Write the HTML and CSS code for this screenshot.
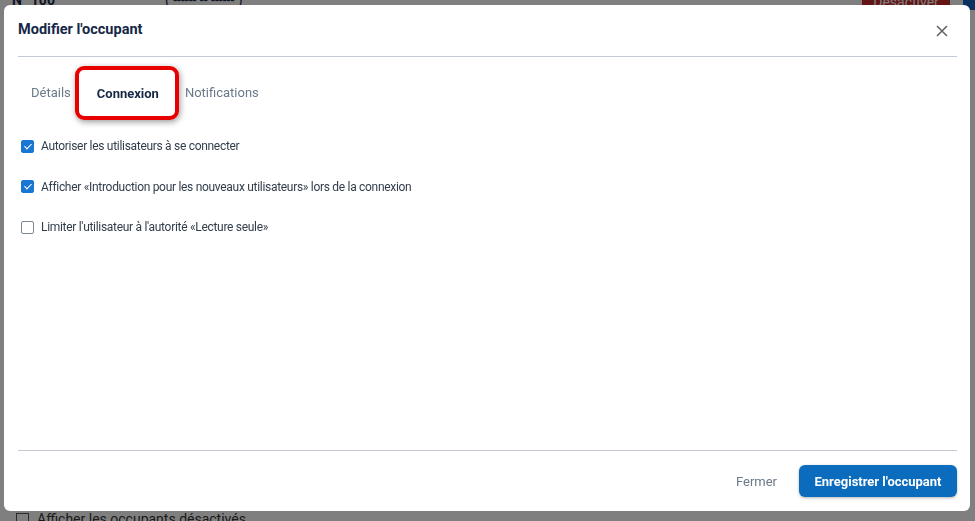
FILE: index.html
```html
<!DOCTYPE html>
<html lang="fr">
<head>
    <meta charset="UTF-8">
    <title>Modifier l'occupant</title>
    <link rel="stylesheet" href="styles.css">
</head>
<body>

    <!-- Page derrière la modale -->
    <div class="page">
        <div class="page-top">
            <span class="page-title">N° 100</span>
            <span class="page-sub">( ------ -- ------ )</span>
            <span class="page-btn">Désactiver</span>
            <span class="page-corner"></span>
        </div>
        <div class="page-bottom">
            <span class="page-box"></span>
            <span>Afficher les occupants désactivés</span>
        </div>
    </div>

    <!-- Modale -->
    <div class="overlay">
        <div class="modal">
            <div class="modal-header">
                <h2>Modifier l'occupant</h2>
                <span class="close">
                    <svg width="14" height="14" viewBox="0 0 14 14"><path d="M2 2L12 12M12 2L2 12" stroke="#666" stroke-width="1.6" fill="none"/></svg>
                </span>
            </div>

            <div class="tabs">
                <span class="tab">Détails</span>
                <span class="tab active">Connexion</span>
                <span class="tab">Notifications</span>
            </div>

            <div class="options">
                <label class="option">
                    <span class="box checked"></span>
                    Autoriser les utilisateurs à se connecter
                </label>
                <label class="option">
                    <span class="box checked"></span>
                    Afficher «Introduction pour les nouveaux utilisateurs» lors de la connexion
                </label>
                <label class="option">
                    <span class="box"></span>
                    Limiter l'utilisateur à l'autorité «Lecture seule»
                </label>
            </div>

            <div class="modal-footer">
                <button class="btn-link">Fermer</button>
                <button class="btn-primary">Enregistrer l'occupant</button>
            </div>
        </div>
    </div>

</body>
</html>
```

FILE: styles.css
```css
body {
    font-family: Roboto, "Liberation Sans", sans-serif;
    margin: 0;
    padding: 0;
    background-color: #fff;
    width: 975px;
    height: 521px;
    overflow: hidden;
}

/* Page derrière */
.page {
    height: 521px;
    display: flex;
    flex-direction: column;
    justify-content: space-between;
}
.page-top {
    display: flex;
    align-items: flex-start;
    height: 10px;
    padding: 0 0 0 12px;
    font-size: 14px;
    color: #1b2a4a;
    overflow: hidden;
}
.page-title {
    font-weight: bold;
    margin-top: -8px;
}
.page-sub {
    margin-top: -8px;
    margin-left: 110px;
}
.page-btn {
    margin-left: auto;
    margin-top: -10px;
    background-color: #c62828;
    color: #fff;
    width: 88px;
    text-align: center;
    padding: 4px 0;
    margin-right: 13px;
    border-radius: 3px;
}
.page-corner {
    width: 12px;
    height: 14px;
    background-color: #1565c0;
    border-radius: 0 0 0 3px;
}
.page-bottom {
    display: flex;
    align-items: center;
    gap: 8px;
    padding: 0 0 0 16px;
    height: 20px;
    margin-bottom: -8px;
    font-size: 14px;
    color: #333;
}
.page-box {
    width: 11px;
    height: 11px;
    border: 1px solid #555;
}

/* Overlay */
.overlay {
    position: fixed;
    top: 0;
    left: 0;
    width: 100%;
    height: 100%;
    background-color: rgba(0, 0, 0, 0.5);
}
.modal {
    position: absolute;
    top: 5px;
    left: 4px;
    width: 966px;
    height: 506px;
    background-color: #fff;
    border-radius: 6px;
    display: flex;
    flex-direction: column;
    box-sizing: border-box;
    padding: 0 13px 0 14px;
}

/* Header */
.modal-header {
    display: flex;
    align-items: center;
    justify-content: space-between;
    height: 51px;
    border-bottom: 1.5px solid #c3cad3;
}
.modal-header h2 {
    margin: 0 0 2px 0;
    font-size: 14.5px;
    color: #152848;
    font-weight: bold;
}
.close {
    display: flex;
    margin-right: 8px;
}

/* Onglets */
.tabs {
    display: flex;
    align-items: center;
    height: 70px;
    padding-left: 13px;
}
.tab {
    font-size: 13px;
    color: #6b7989;
}
.tab.active {
    font-weight: bold;
    color: #152848;
    margin: 2px 6px 0 4px;
    padding: 16px 16px 15px 18px;
    border: 4px solid #e80000;
    border-radius: 9px;
    box-shadow: 1px 2px 6px rgba(0, 0, 0, 0.4);
}

/* Options */
.options {
    display: flex;
    flex-direction: column;
    gap: 24.5px;
    padding-left: 3px;
    padding-top: 11px;
    flex: 1;
}
.option {
    display: flex;
    align-items: center;
    gap: 7px;
    font-size: 12px;
    letter-spacing: -0.3px;
    color: #323d4b;
    height: 16px;
}
.box {
    width: 11px;
    height: 11px;
    border: 1px solid #7d8794;
    border-radius: 2px;
    position: relative;
    flex-shrink: 0;
}
.box.checked {
    background-color: #1976d2;
    border-color: #1976d2;
}
.box.checked::after {
    content: "";
    position: absolute;
    left: 3.5px;
    top: 1px;
    width: 3px;
    height: 6px;
    border: solid #fff;
    border-width: 0 1.6px 1.6px 0;
    transform: rotate(45deg);
}

/* Footer */
.modal-footer {
    display: flex;
    align-items: center;
    justify-content: flex-end;
    gap: 22px;
    height: 60px;
    border-top: 1.5px solid #c3cad3;
}
.btn-link {
    background: none;
    border: none;
    padding: 0;
    font-family: inherit;
    font-size: 13px;
    color: #6b7989;
    cursor: pointer;
}
.btn-primary {
    background-color: #0b6cbd;
    color: #fff;
    font-family: inherit;
    font-size: 13px;
    font-weight: bold;
    border: none;
    border-radius: 6px;
    width: 158px;
    height: 32px;
    box-shadow: 0 1px 3px rgba(0, 0, 0, 0.3);
    cursor: pointer;
}
```
